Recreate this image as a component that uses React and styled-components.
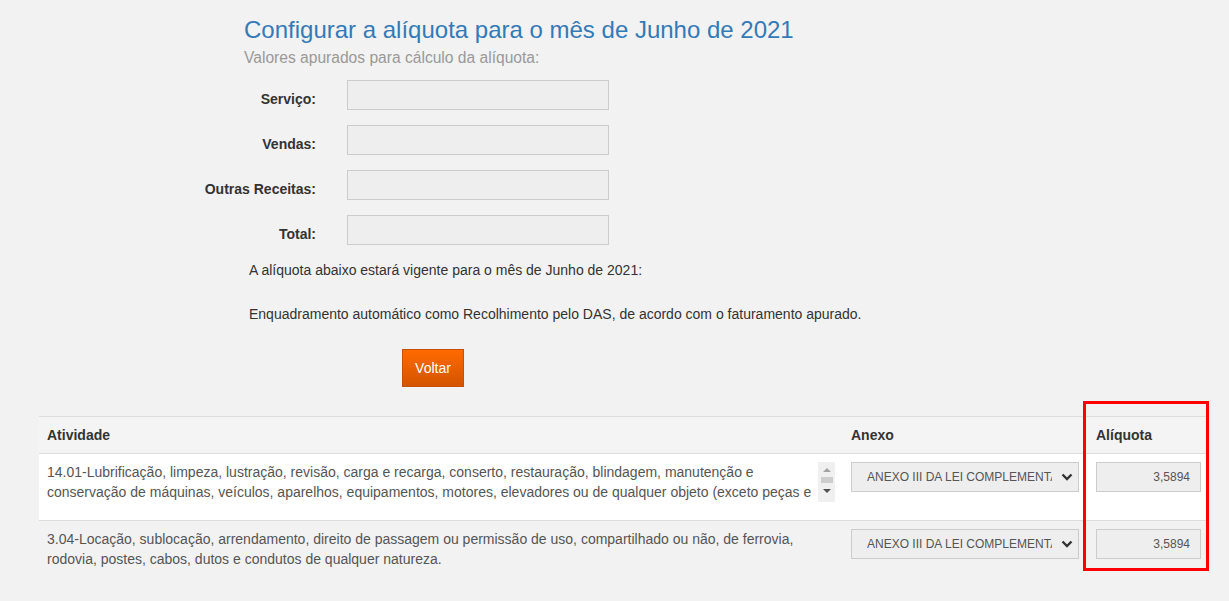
import React from "react";
import styled, { createGlobalStyle } from "styled-components";

const Global = createGlobalStyle`
  html, body { margin: 0; padding: 0; }
  body {
    background: #f2f2f2;
    font-family: "Liberation Sans", Arial, sans-serif;
    font-size: 14px;
    color: #333;
  }
  * { box-sizing: border-box; }
`;

const Page = styled.div`
  position: relative;
  width: 1229px;
  min-height: 601px;
  padding-top: 17px;
`;

const Header = styled.div`
  padding-left: 244px;
`;

const Title = styled.h1`
  margin: 0;
  font-size: 24px;
  line-height: 26px;
  font-weight: normal;
  color: #337ab7;
`;

const Subtitle = styled.p`
  margin: 5px 0 0;
  font-size: 15.6px;
  line-height: 20px;
  color: #999;
`;

const Form = styled.div`
  margin-top: 12px;
  padding-left: 186px;
  display: grid;
  grid-template-columns: 130px 262px;
  column-gap: 31px;
  row-gap: 15px;
`;

const Label = styled.label`
  text-align: right;
  font-weight: bold;
  font-size: 14px;
  line-height: 20px;
  padding-top: 9px;
  color: #333;
`;

const Field = styled.input`
  height: 30px;
  width: 262px;
  background: #eee;
  border: 1px solid #ccc;
  margin: 0;
  font-family: inherit;
`;

const Note = styled.p`
  margin: ${(p) => p.$top}px 0 0 249px;
  font-size: 14px;
  line-height: 20px;
  color: #333;
`;

const ButtonRow = styled.div`
  margin-top: 25px;
  padding-left: 402px;
`;

const Button = styled.button`
  width: 62px;
  height: 38px;
  border: 1px solid #c95000;
  background: linear-gradient(#ff6a00, #d35400);
  color: #fff;
  font-family: inherit;
  font-size: 14px;
  padding: 0;
  cursor: pointer;
`;

const Table = styled.table`
  margin: 29px 0 0 39px;
  width: 1167px;
  border-collapse: collapse;
  table-layout: fixed;
`;

const Th = styled.th`
  text-align: left;
  font-weight: bold;
  color: #333;
  padding: 8px;
  line-height: 20px;
  background: #f4f4f4;
  border-top: 1px solid #ddd;
  border-bottom: 1px solid #ddd;
`;

const Row = styled.tr`
  background: ${(p) => (p.$white ? "#fff" : "transparent")};
  border-bottom: ${(p) => (p.$white ? "1px solid #ddd" : "none")};
`;

const Td = styled.td`
  padding: 8px;
  vertical-align: top;
  color: #555;
  line-height: 20px;
`;

const ActivityBox = styled.div`
  display: flex;
  height: 40px;
  margin-bottom: 10px;
`;

const ActivityText = styled.textarea`
  flex: 1;
  height: 40px;
  border: none;
  padding: 0;
  margin: 0;
  resize: none;
  overflow: hidden;
  background: #fff;
  font-family: "Liberation Sans", Arial, sans-serif;
  font-size: 14px;
  line-height: 20px;
  color: #555;
  outline: none;
`;

const ScrollTrack = styled.div`
  width: 17px;
  height: 40px;
  background: #f0f0f0;
  display: flex;
  flex-direction: column;
  align-items: center;
  padding-top: 6px;
`;

const Arrow = styled.div`
  width: 0;
  height: 0;
  border-left: 4px solid transparent;
  border-right: 4px solid transparent;
  ${(p) =>
    p.$up
      ? `border-bottom: 4px solid #a3a3a3;`
      : `border-top: 4px solid #505050;`}
`;

const Thumb = styled.div`
  width: 12px;
  height: 6px;
  background: #cdcdcd;
  margin: 5px 0 6px;
`;

const PlainText = styled.div`
  color: #555;
  font-size: 14px;
  line-height: 20px;
`;

const SelectWrap = styled.div`
  position: relative;
  width: 228px;
  height: 30px;
`;

const Select = styled.select`
  appearance: none;
  -webkit-appearance: none;
  width: 228px;
  height: 30px;
  margin: 0;
  background: #eee;
  border: 1px solid #ccc;
  border-radius: 0;
  padding: 0 26px 0 15px;
  font-family: "Liberation Sans", Arial, sans-serif;
  font-size: 12px;
  color: #555;
  white-space: nowrap;
  overflow: hidden;
  text-overflow: clip;
`;

const Chevron = styled.svg`
  position: absolute;
  right: 6px;
  top: 11px;
  pointer-events: none;
`;

const RateInput = styled.input`
  width: 105px;
  height: 30px;
  margin: 0;
  background: #eee;
  border: 1px solid #ccc;
  text-align: right;
  padding: 0 10px 0 4px;
  font-family: "Liberation Sans", Arial, sans-serif;
  font-size: 12px;
  color: #555;
`;

const Highlight = styled.div`
  position: absolute;
  left: 1083px;
  top: 401px;
  width: 126px;
  height: 170px;
  border: 3px solid #ff0000;
  pointer-events: none;
`;

const anexo = "ANEXO III DA LEI COMPLEMENTAR 123/2006";

function AnexoSelect() {
  return (
    <SelectWrap>
      <Select defaultValue={anexo}>
        <option value={anexo}>{anexo}</option>
      </Select>
      <Chevron width="12" height="8" viewBox="0 0 12 8">
        <polyline
          points="1.5,1.5 6,6 10.5,1.5"
          fill="none"
          stroke="#333"
          strokeWidth="2.4"
        />
      </Chevron>
    </SelectWrap>
  );
}

export default function App() {
  return (
    <Page>
      <Global />
      <Header>
        <Title>Configurar a alíquota para o mês de Junho de 2021</Title>
        <Subtitle>Valores apurados para cálculo da alíquota:</Subtitle>
      </Header>
      <Form>
        <Label>Serviço:</Label>
        <Field readOnly />
        <Label>Vendas:</Label>
        <Field readOnly />
        <Label>Outras Receitas:</Label>
        <Field readOnly />
        <Label>Total:</Label>
        <Field readOnly />
      </Form>
      <Note $top={15}>A alíquota abaixo estará vigente para o mês de Junho de 2021:</Note>
      <Note $top={24}>
        Enquadramento automático como Recolhimento pelo DAS, de acordo com o faturamento apurado.
      </Note>
      <ButtonRow>
        <Button>Voltar</Button>
      </ButtonRow>
      <Table>
        <colgroup>
          <col style={{ width: 804 }} />
          <col style={{ width: 245 }} />
          <col style={{ width: 118 }} />
        </colgroup>
        <thead>
          <tr>
            <Th>Atividade</Th>
            <Th>Anexo</Th>
            <Th>Alíquota</Th>
          </tr>
        </thead>
        <tbody>
          <Row $white>
            <Td>
              <ActivityBox>
                <ActivityText
                  readOnly
                  value="14.01-Lubrificação, limpeza, lustração, revisão, carga e recarga, conserto, restauração, blindagem, manutenção e conservação de máquinas, veículos, aparelhos, equipamentos, motores, elevadores ou de qualquer objeto (exceto peças e partes empregadas, que ficam sujeitas ao ICMS)."
                />
                <ScrollTrack>
                  <Arrow $up />
                  <Thumb />
                  <Arrow />
                </ScrollTrack>
              </ActivityBox>
            </Td>
            <Td>
              <AnexoSelect />
            </Td>
            <Td>
              <RateInput readOnly value="3,5894" />
            </Td>
          </Row>
          <Row>
            <Td>
              <PlainText>
                3.04-Locação, sublocação, arrendamento, direito de passagem ou permissão de uso, compartilhado ou não, de ferrovia, rodovia, postes, cabos, dutos e condutos de qualquer natureza.
              </PlainText>
            </Td>
            <Td>
              <AnexoSelect />
            </Td>
            <Td>
              <RateInput readOnly value="3,5894" />
            </Td>
          </Row>
        </tbody>
      </Table>
      <Highlight />
    </Page>
  );
}
